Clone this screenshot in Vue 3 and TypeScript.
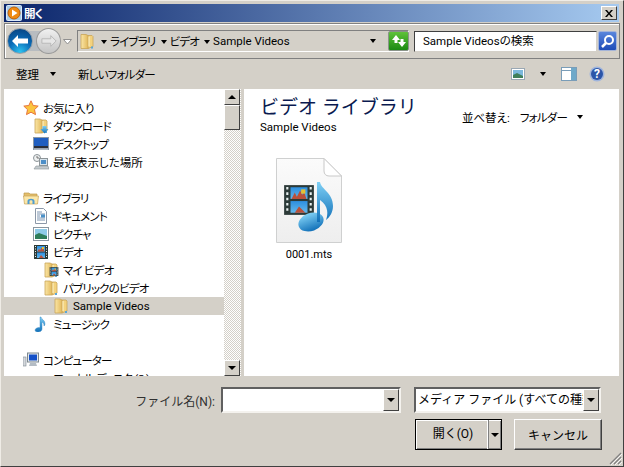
<script setup lang="ts">
type Row = { label: string; icon: string; indent: number; selected?: boolean; wide?: boolean }

// null = 空行
const tree: (Row | null)[] = [
  { label: 'お気に入り', icon: 'star', indent: 0 },
  { label: 'ダウンロード', icon: 'download', indent: 1 },
  { label: 'デスクトップ', icon: 'desktop', indent: 1 },
  { label: '最近表示した場所', icon: 'recent', indent: 1, wide: true },
  null,
  { label: 'ライブラリ', icon: 'library', indent: 0 },
  { label: 'ドキュメント', icon: 'doc', indent: 1 },
  { label: 'ピクチャ', icon: 'picture', indent: 1 },
  { label: 'ビデオ', icon: 'video', indent: 1 },
  { label: 'マイ ビデオ', icon: 'myvideo', indent: 2 },
  { label: 'パブリックのビデオ', icon: 'folder', indent: 2 },
  { label: 'Sample Videos', icon: 'folder', indent: 3, selected: true, wide: true },
  { label: 'ミュージック', icon: 'music', indent: 1 },
  null,
  { label: 'コンピューター', icon: 'computer', indent: 0 },
  { label: 'ローカル ディスク (C:)', icon: 'none', indent: 1 },
]

const crumbs = ['ライブラリ', 'ビデオ', 'Sample Videos']
</script>

<template>
  <div class="window">
    <svg class="defs" width="0" height="0">
      <defs>
        <linearGradient id="fold" x1="0" y1="0" x2="1" y2="0">
          <stop offset="0" stop-color="#fbe6a6" />
          <stop offset="1" stop-color="#e2b95c" />
        </linearGradient>
        <linearGradient id="blue" x1="0" y1="0" x2="0" y2="1">
          <stop offset="0" stop-color="#7fd0f5" />
          <stop offset="1" stop-color="#1170b8" />
        </linearGradient>
        <linearGradient id="film" x1="0" y1="0" x2="0" y2="1">
          <stop offset="0" stop-color="#2d8fe0" />
          <stop offset="1" stop-color="#63b7ea" />
        </linearGradient>
        <symbol id="i-folder" viewBox="0 0 16 16">
          <path d="M9 2h4l1 1v10l-5 2z" fill="#f3d27e" stroke="#c9a458" stroke-width=".8" />
          <path d="M2 1h5l2 1v13l-2 0H2z" fill="url(#fold)" stroke="#c9a458" stroke-width=".8" />
          <path d="M10 3v10" stroke="#fff3c8" />
          <path d="M12 13h2v2h-2z" fill="#5aa6d8" />
        </symbol>
        <symbol id="i-film" viewBox="0 0 16 16">
          <rect x="1" y="1" width="14" height="14" fill="#2c3a38" />
          <rect x="4" y="2" width="8" height="5.5" fill="url(#film)" />
          <rect x="4" y="8.500" width="8" height="5.5" fill="url(#film)" />
          <path d="M4.500 7.500l1.500-3 1 2 1.500-3 1 2 1-1 1 3zM6 14l2-3 3 3z" fill="#b9503a" />
          <path d="M9 3h2v2H9z" fill="#e8c030" />
          <path d="M2 2.500h1M2 5h1M2 7.500h1M2 10h1M2 12.500h1M13 2.500h1M13 5h1M13 7.500h1M13 10h1M13 12.500h1" stroke="#e8f0f0" stroke-width="1.200" />
        </symbol>
        <symbol id="i-note" viewBox="0 0 16 16">
          <path d="M8 1c.4 2.600 4.200 3 4 7-.1 1-.6 1.600-1 2 .2-2.200-1-3.500-2-4v7c0 2-2 3-4 3s-3.200-1-2.800-2.300C2.500 12.300 5.200 11 7 11.700V1z" fill="url(#blue)" stroke="#2a7fc0" stroke-width=".4" />
        </symbol>
      </defs>
    </svg>

    <div class="titlebar">
      <svg class="app-icon" width="16" height="16" viewBox="0 0 16 16">
        <rect x=".5" y=".5" width="15" height="15" rx="1" fill="#a9cdea" stroke="#dceafa" />
        <circle cx="8" cy="8" r="6" fill="#ef8a12" stroke="#c05f05" />
        <path d="M6 4.500 11.500 8 6 11.500z" fill="#fff" />
      </svg>
      <span class="title">開く</span>
      <button class="close">
        <svg width="8" height="7" viewBox="0 0 8 7"><path d="M0 0l2 0 2 2.400L6 0h2L5 3.500 8 7H6L4 4.600 2 7H0l3-3.500z" fill="#000" /></svg>
      </button>
    </div>

    <div class="navbar">
      <div class="nav-pair">
        <span class="nav-btn back">
          <svg width="18" height="14" viewBox="0 0 18 14"><path d="M1 7l6-6v3.500h10v5H7V13z" fill="#fff" /></svg>
        </span>
        <span class="nav-btn forward">
          <svg width="16" height="14" viewBox="0 0 18 14"><path d="M17 7l-6-6v3.500H1v5h10V13z" fill="#e6e6e6" stroke="#b4b4b4" /></svg>
        </span>
      </div>
      <svg class="nav-drop" width="9" height="6" viewBox="0 0 9 6"><path d="M.5.500h8L4.500 5z" fill="#fff" stroke="#8f8f8f" /></svg>
      <div class="address">
        <svg class="addr-folder" width="16" height="17"><use href="#i-folder" /></svg>
        <span v-for="c in crumbs" :key="c" class="crumb" :class="{ tight: c !== 'Sample Videos' }"><i class="caret"></i>{{ c }}</span>
        <i class="caret addr-caret"></i>
      </div>
      <span class="refresh">
        <svg width="14" height="14" viewBox="0 0 14 14">
          <path d="M0 6l4-5 4 5H5.500v3h-3V6zM14 8l-4 5-4-5h2.500V5h3v3z" fill="#fff" />
        </svg>
      </span>
      <div class="search">Sample Videosの検索</div>
      <span class="search-btn">
        <svg width="15" height="15" viewBox="0 0 15 15">
          <circle cx="9" cy="6" r="4" fill="none" stroke="#fff" stroke-width="2" />
          <path d="M6 9l-4 4" stroke="#fff" stroke-width="2.500" />
        </svg>
      </span>
    </div>

    <div class="toolbar">
      <span class="tool first">整理</span>
      <i class="caret tool-caret"></i>
      <span class="tool tight">新しいフォルダー</span>
      <span class="spacer"></span>
      <svg width="14" height="12" viewBox="0 0 14 12">
        <rect x=".5" y=".5" width="13" height="11" fill="#fff" stroke="#9aa8b4" />
        <rect x="2" y="2" width="10" height="8" fill="#7bb8dc" />
        <path d="M2 10V7l4-2 6 3v2z" fill="#3f7f5a" />
      </svg>
      <i class="caret view-caret"></i>
      <svg class="preview" width="16" height="14" viewBox="0 0 16 14">
        <rect x=".5" y=".5" width="15" height="13" fill="#fff" stroke="#7a9db8" />
        <rect x="10" y="1" width="5" height="12" fill="#6fa9c9" />
        <path d="M1 3.500h9" stroke="#7a9db8" />
      </svg>
      <svg width="16" height="16" viewBox="0 0 16 16">
        <circle cx="8" cy="8" r="7.500" fill="#9fb4dc" />
        <circle cx="8" cy="8" r="6" fill="#2b55a8" />
        <text x="8" y="12" text-anchor="middle" class="help">?</text>
      </svg>
    </div>

    <div class="main">
      <div class="tree">
        <div
          v-for="(row, i) in tree"
          :key="i"
          class="row"
          :class="{ selected: row?.selected }"
          :style="{ paddingLeft: 19 + (row?.indent ?? 0) * 10 + 'px' }"
        >
          <template v-if="row">
            <svg v-if="row.icon === 'star'" class="icon" viewBox="0 0 16 16">
              <path d="M8 .8l2.200 4.700 5 .6-3.700 3.500 1 5L8 12.200 3.500 14.600l1-5L.8 6.100l5-.6z" fill="#fbc43e" stroke="#e8743c" />
            </svg>
            <svg v-else-if="row.icon === 'download'" class="icon" viewBox="0 0 16 16">
              <use href="#i-folder" width="16" height="16" />
              <path d="M9.500 8h4v3h2l-4 4.500-4-4.500h2z" fill="url(#blue)" />
            </svg>
            <svg v-else-if="row.icon === 'desktop'" class="icon" viewBox="0 0 16 16">
              <rect x=".5" y="1.500" width="15" height="12" fill="#a8b8c8" stroke="#8a98a6" />
              <rect x="1" y="2" width="14" height="8" fill="#1f5ec0" />
              <rect x="1" y="10" width="14" height="2.500" fill="#2a2f3a" />
              <rect x="1" y="12.500" width="14" height="1" fill="#d0d8e0" />
            </svg>
            <svg v-else-if="row.icon === 'recent'" class="icon" viewBox="0 0 16 16">
              <circle cx="4" cy="4" r="3.500" fill="#eef0f0" stroke="#8c9498" />
              <path d="M4 2v2h2" stroke="#555" fill="none" stroke-width=".8" />
              <rect x="6.500" y="4.500" width="8" height="7" fill="#d8e4ec" stroke="#8c9498" />
              <rect x="8" y="6" width="5" height="4" fill="#4d8fc8" />
              <path d="M3 12h12l1 3H1z" fill="#c4cace" stroke="#8c9498" stroke-width=".6" />
            </svg>
            <svg v-else-if="row.icon === 'library'" class="icon" viewBox="0 0 16 16">
              <path d="M1 3h5l1 1h7v3H1z" fill="#e3bf6c" stroke="#bd9a4c" stroke-width=".7" />
              <path d="M.5 6h15l-1 8H1.500z" fill="#fbe7a9" stroke="#c9a458" stroke-width=".7" />
              <path d="M4.500 14v-3c0-3 7-3 7 0v3h-2v-3c0-1-3-1-3 0v3z" fill="#4f9cd0" />
            </svg>
            <svg v-else-if="row.icon === 'doc'" class="icon" viewBox="0 0 16 16">
              <path d="M2.500.500h8l3 3v12h-11z" fill="#fff" stroke="#8c98a8" />
              <path d="M4 4h5M4 6h8M4 8h3M4 10h8M4 12h8" stroke="#5a7a9c" stroke-width=".8" />
              <rect x="8" y="6.500" width="4" height="3" fill="#4a90c8" />
            </svg>
            <svg v-else-if="row.icon === 'picture'" class="icon" viewBox="0 0 16 16">
              <rect x=".5" y="1.500" width="15" height="13" fill="#fff" stroke="#8a96a0" />
              <rect x="2" y="3" width="12" height="10" fill="#8fcbe8" />
              <path d="M2 13V9l4-2 8 3v3z" fill="#2e7d5a" />
            </svg>
            <svg v-else-if="row.icon === 'video'" class="icon" viewBox="0 0 16 16">
              <use href="#i-film" width="16" height="16" />
            </svg>
            <svg v-else-if="row.icon === 'myvideo'" class="icon" viewBox="0 0 16 16">
              <use href="#i-folder" width="16" height="16" />
              <use href="#i-film" x="6" y="4" width="10" height="11" />
            </svg>
            <svg v-else-if="row.icon === 'folder'" class="icon" viewBox="0 0 16 16">
              <use href="#i-folder" width="16" height="16" />
            </svg>
            <svg v-else-if="row.icon === 'music'" class="icon" viewBox="0 0 16 16">
              <use href="#i-note" width="16" height="16" />
            </svg>
            <svg v-else-if="row.icon === 'computer'" class="icon" viewBox="0 0 16 16">
              <rect x="0" y="5" width="3" height="9" fill="#d4d8dc" stroke="#7c8890" stroke-width=".6" />
              <rect x="4.500" y="1" width="11" height="9" fill="#e4e8ec" stroke="#7c8890" />
              <rect x="6" y="2.500" width="8" height="6" fill="#1450c8" />
              <path d="M6 14h8l-1-3H7z" fill="#b4bcc4" />
            </svg>
            <span v-else class="icon"></span>
            <span class="label" :class="{ tight: !row.wide }">{{ row.label }}</span>
          </template>
        </div>
      </div>

      <div class="scrollbar">
        <span class="sb-btn"><i class="tri up"></i></span>
        <span class="sb-thumb"></span>
        <span class="sb-track"></span>
        <span class="sb-btn"><i class="tri"></i></span>
      </div>

      <div class="content">
        <div class="content-head">
          <div>
            <div class="lib-title">ビデオ ライブラリ</div>
            <div class="lib-sub">Sample Videos</div>
          </div>
          <div class="sort">
            <span>並べ替え:</span>
            <span class="sort-value tight">フォルダー</span>
            <i class="caret"></i>
          </div>
        </div>
        <div class="file">
          <svg width="68" height="86" viewBox="0 0 68 86">
            <defs>
              <linearGradient id="page" x1="0" y1="0" x2="0" y2="1">
                <stop offset="0" stop-color="#fbfbfb" />
                <stop offset="1" stop-color="#eeeeee" />
              </linearGradient>
            </defs>
            <path d="M1.500.500H49L66.500 18v66.500H1.500z" fill="url(#page)" stroke="#cfd0d0" />
            <path d="M49 .5V13c0 3 2 5 5 5h12.500z" fill="#fff" stroke="#c8c8c8" />
            <use href="#i-film" x="7" y="23" width="34" height="38" />
            <ellipse cx="36" cy="64" rx="13" ry="9" transform="rotate(-20 36 64)" fill="url(#blue)" />
            <path d="M42 24h3c1 7 13 11 13 24 0 6-3 11-7 14 2-5 3-14-6-20v22h-3z" fill="url(#blue)" />
          </svg>
          <span class="file-name">0001.mts</span>
        </div>
      </div>
    </div>

    <div class="footer">
      <div class="footer-row first-row">
        <span class="name-label">ファイル名(N):</span>
        <div class="combo name-combo"><span class="combo-text"></span><span class="sb-btn combo-btn"><i class="tri"></i></span></div>
        <div class="combo type-combo"><span class="combo-text">メディア ファイル (すべての種類)</span><span class="sb-btn combo-btn"><i class="tri"></i></span></div>
      </div>
      <div class="footer-row buttons">
        <div class="open">
          <span class="open-main">開く(O)</span>
          <span class="open-drop"><i class="tri"></i></span>
        </div>
        <button class="cancel">キャンセル</button>
      </div>
    </div>

    <svg class="grip" width="13" height="13" viewBox="0 0 13 13">
      <path d="M12 1L1 12M12 5l-7 7M12 9l-3 3" stroke="#808080" stroke-width="1.200" />
      <path d="M13 2L2 13M13 6l-7 7M13 10l-3 3" stroke="#fff" stroke-width=".8" />
    </svg>
  </div>
</template>

<style>
html, body {
  margin: 0;
  background: #d4d0c8;
}
</style>

<style scoped>
.window {
  position: relative;
  box-sizing: border-box;
  width: 624px;
  height: 467px;
  padding: 3px 4px 0 3px;
  background: #d4d0c8;
  border-right: 1px solid #404040;
  border-bottom: 1px solid #404040;
  border-top: 1px solid #efece6;
  border-left: 1px solid #efece6;
  overflow: hidden;
  color: #000;
  font-family: Roboto, "Noto Sans CJK JP", sans-serif;
  font-size: 11.5px;
  font-feature-settings: "palt" 1;
  display: flex;
  flex-direction: column;
}
.defs {
  position: absolute;
}
i {
  display: block;
}
.tight {
  letter-spacing: -0.8px;
}
.titlebar {
  display: flex;
  align-items: center;
  flex: none;
  height: 18px;
  padding: 0 2px;
  background: linear-gradient(90deg, #0a246a, #a6caf0);
  color: #fff;
  font-weight: 700;
}
.app-icon {
  flex: none;
}
.title {
  margin-left: 2px;
  flex: 1;
  letter-spacing: -1px;
}
.close {
  box-sizing: border-box;
  width: 16px;
  height: 14px;
  padding: 0;
  display: flex;
  align-items: center;
  justify-content: center;
  background: #d4d0c8;
  border: 1px solid;
  border-color: #fff #404040 #404040 #fff;
}
.navbar {
  flex: none;
  box-sizing: border-box;
  height: 36px;
  margin: 1px -1px 0 0;
  padding: 0 2px 0 2px;
  display: flex;
  align-items: center;
  border: 1px solid #808080;
  box-shadow: inset 1px 1px 0 #fff;
}
.nav-pair {
  flex: none;
  display: flex;
  align-items: center;
  background: linear-gradient(90deg, transparent 20%, #b8bcc0 20% 80%, transparent 80%) center / 100% 20px no-repeat;
}
.nav-btn {
  box-sizing: border-box;
  flex: none;
  width: 26px;
  height: 26px;
  border-radius: 50%;
  display: flex;
  align-items: center;
  justify-content: center;
}
.back {
  background: radial-gradient(circle at 50% 95%, #2ec3f0 0, #0a6cb8 45%, #063c78 100%);
  border: 1px solid #9aa2aa;
}
.forward {
  width: 25px;
  margin-left: 3px;
  background: linear-gradient(#f0f0f0, #c4c4c4);
  border: 1px solid #9a9a9a;
}
.nav-drop {
  margin: 2px 0 0 2px;
  flex: none;
}
.address {
  flex: 1;
  min-width: 0;
  box-sizing: border-box;
  height: 22px;
  margin-left: 5px;
  padding-left: 1px;
  display: flex;
  align-items: center;
  border: 1px solid;
  border-color: #808080 #fff #fff #808080;
}
.addr-folder {
  flex: none;
  margin-right: 6px;
}
.crumb {
  display: flex;
  align-items: center;
  white-space: nowrap;
  margin-right: 5px;
}
.caret {
  flex: none;
  width: 0;
  height: 0;
  border-left: 3.5px solid transparent;
  border-right: 3.5px solid transparent;
  border-top: 4px solid #000;
}
.crumb .caret {
  margin: 1px 3px 0 0;
}
.addr-caret {
  margin: 0 32px 0 auto;
}
.refresh {
  flex: none;
  box-sizing: border-box;
  width: 21px;
  height: 20px;
  display: flex;
  align-items: center;
  justify-content: center;
  background: linear-gradient(#5fc23a, #1b8a12);
  border: 1px solid #8a948a;
  border-radius: 2px;
  margin-left: -21px;
}
.search {
  flex: none;
  box-sizing: border-box;
  width: 183px;
  height: 21px;
  margin-left: 5px;
  padding-left: 8px;
  line-height: 19px;
  background: #fff;
  border: 1px solid;
  border-color: #404040 #d4d0c8 #d4d0c8 #404040;
  white-space: nowrap;
}
.search-btn {
  flex: none;
  box-sizing: border-box;
  width: 19px;
  height: 20px;
  margin-left: 1px;
  display: flex;
  align-items: center;
  justify-content: center;
  background: linear-gradient(#5a86dc, #1e4cb8);
  border: 1px solid #a4b4d8;
  border-radius: 2px;
}
.toolbar {
  flex: none;
  box-sizing: border-box;
  height: 30px;
  padding: 0 14px 1px 12px;
  display: flex;
  align-items: center;
}
.tool {
  white-space: nowrap;
}
.tool-caret {
  margin: 1px 22px 0 11px;
}
.spacer {
  flex: 1;
}
.view-caret {
  margin: 0 15px;
}
.preview {
  margin-right: 12px;
}
.help {
  fill: #fff;
  font-size: 12px;
  font-weight: 700;
}
.main {
  flex: none;
  height: 287px;
  display: flex;
  overflow: hidden;
}
.tree {
  flex: none;
  box-sizing: border-box;
  width: 220px;
  height: 287px;
  padding-top: 10px;
  background: #fff;
  overflow: hidden;
}
.row {
  height: 18px;
  display: flex;
  align-items: center;
  white-space: nowrap;
}
.row.selected {
  background: #d4d0c8;
}
.icon {
  flex: none;
  width: 16px;
  height: 16px;
  margin-right: 4px;
}
.scrollbar {
  flex: none;
  width: 17px;
  display: flex;
  flex-direction: column;
  background-color: #fff;
  background-image: conic-gradient(#d4d0c8 25%, #fff 0 50%, #d4d0c8 0 75%, #fff 0);
  background-size: 2px 2px;
}
.sb-btn {
  flex: none;
  box-sizing: border-box;
  width: 16px;
  height: 16px;
  display: flex;
  align-items: center;
  justify-content: center;
  background: #d4d0c8;
  border: 1px solid;
  border-color: #fff #404040 #404040 #fff;
}
.sb-thumb {
  flex: none;
  box-sizing: border-box;
  width: 16px;
  height: 25px;
  background: #d4d0c8;
  border: 1px solid;
  border-color: #fff #404040 #404040 #fff;
}
.sb-track {
  flex: 1;
}
.tri {
  width: 0;
  height: 0;
  border: 4px solid transparent;
  border-top-color: #000;
  border-bottom: 0;
}
.tri.up {
  border-top: 0;
  border-bottom: 4px solid #000;
}
.content {
  flex: 1;
  margin-left: 3px;
  padding: 8px 0 0 16px;
  background: #fff;
  min-width: 0;
}
.content-head {
  display: flex;
  justify-content: space-between;
  align-items: center;
  padding-right: 36px;
}
.lib-title {
  font-size: 19px;
  line-height: 21px;
  color: #0a1a50;
  white-space: nowrap;
  font-feature-settings: normal;
}
.lib-sub {
  margin-top: 2px;
  line-height: 15px;
}
.sort {
  display: flex;
  align-items: center;
  margin-top: 2px;
  white-space: nowrap;
}
.sort-value {
  margin: 0 10px 0 10px;
}
.file {
  width: 96px;
  margin: 23px 0 0 1px;
  display: flex;
  flex-direction: column;
  align-items: center;
}
.file-name {
  margin-top: 4px;
  font-size: 11px;
}
.footer {
  flex: 1;
  padding: 11px 17px 0 0;
  font-size: 12px;
  font-feature-settings: normal;
}
.footer-row {
  display: flex;
  align-items: center;
  justify-content: flex-end;
}
.first-row {
  padding-right: 1px;
}
.name-label {
  margin-right: 6px;
  color: #303030;
  white-space: nowrap;
}
.combo {
  box-sizing: border-box;
  height: 26px;
  display: flex;
  background: #fff;
  border: 2px solid;
  border-color: #606060 #f4f2ee #f4f2ee #606060;
  overflow: hidden;
}
.name-combo {
  width: 180px;
}
.type-combo {
  width: 187px;
  margin-left: 13px;
}
.combo-text {
  flex: 1;
  min-width: 0;
  padding-left: 2px;
  line-height: 22px;
  white-space: nowrap;
  overflow: hidden;
}
.combo-btn {
  height: 22px;
}
.buttons {
  margin-top: 6px;
}
.open {
  box-sizing: border-box;
  width: 87px;
  height: 31px;
  display: flex;
  border: 1px solid #000;
  box-shadow: inset 1px 1px 0 #fff, inset -1px -1px 0 #808080;
}
.open-main {
  flex: 1;
  padding-left: 3px;
  text-align: center;
  line-height: 29px;
  border-right: 1px solid #fff;
}
.open-drop {
  flex: none;
  width: 12px;
  display: flex;
  align-items: center;
  justify-content: center;
  border-left: 1px solid #808080;
}
.cancel {
  box-sizing: border-box;
  width: 88px;
  height: 31px;
  margin-left: 12px;
  padding: 0;
  background: #d4d0c8;
  font: inherit;
  color: #000;
  border: 1px solid;
  border-color: #fff #404040 #404040 #fff;
  box-shadow: inset -1px -1px 0 #808080;
}
.grip {
  position: absolute;
  right: 1px;
  bottom: 1px;
}
</style>
